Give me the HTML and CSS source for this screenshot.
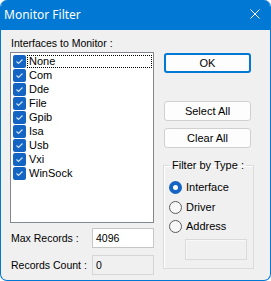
FILE: index.html
```html
<!DOCTYPE html>
<html lang="en">
<head>
    <meta charset="UTF-8">
    <title>Monitor Filter</title>
    <link rel="stylesheet" href="styles.css">
</head>
<body>
    <div class="window">
        <div class="titlebar">
            <span class="title">Monitor Filter</span>
            <svg class="close" width="10" height="10" viewBox="0 0 10 10">
                <path d="M0.5 0.5 L9.5 9.5 M9.5 0.5 L0.5 9.5" stroke="#fff" stroke-width="1" fill="none"/>
            </svg>
        </div>
        <div class="client">
            <div class="left">
                <div class="caption">Interfaces to Monitor :</div>
                <ul class="listbox">
                    <li class="item"><span class="check"></span><span class="text focus">None</span></li>
                    <li class="item"><span class="check"></span><span class="text">Com</span></li>
                    <li class="item"><span class="check"></span><span class="text">Dde</span></li>
                    <li class="item"><span class="check"></span><span class="text">File</span></li>
                    <li class="item"><span class="check"></span><span class="text">Gpib</span></li>
                    <li class="item"><span class="check"></span><span class="text">Isa</span></li>
                    <li class="item"><span class="check"></span><span class="text">Usb</span></li>
                    <li class="item"><span class="check"></span><span class="text">Vxi</span></li>
                    <li class="item"><span class="check"></span><span class="text">WinSock</span></li>
                </ul>
                <div class="field first">
                    <span class="field-label">Max Records :</span>
                    <div class="edit">4096</div>
                </div>
                <div class="field">
                    <span class="field-label">Records Count :</span>
                    <div class="edit readonly">0</div>
                </div>
            </div>
            <div class="right">
                <button class="btn default">OK</button>
                <button class="btn select">Select All</button>
                <button class="btn">Clear All</button>
                <fieldset class="group">
                    <legend>Filter by Type :</legend>
                    <div class="radios">
                        <label class="radio"><span class="dot on"></span>Interface</label>
                        <label class="radio"><span class="dot"></span>Driver</label>
                        <label class="radio"><span class="dot"></span>Address</label>
                    </div>
                    <div class="address-box"></div>
                </fieldset>
            </div>
        </div>
    </div>
</body>
</html>
```

FILE: styles.css
```css
body {
    margin: 0;
    padding: 0;
    background-color: #ffffff;
    font-family: "Liberation Sans", Arial, sans-serif;
    font-size: 10.5px;
    line-height: 13px;
    color: #000;
}
.window {
    width: 269px;
    height: 280px;
    border: 1px solid #0078d4;
    border-top: none;
    border-radius: 7px;
    background-color: #f0f0f0;
    overflow: hidden;
}
.titlebar {
    height: 30px;
    background-color: #0078d4;
    color: #fff;
    display: flex;
    align-items: center;
    justify-content: space-between;
    padding: 0 10px 2px 3px;
    box-sizing: border-box;
}
.title {
    font-family: "Noto Sans", sans-serif;
    font-size: 12px;
}
.client {
    display: flex;
    padding: 7px 0 0 9px;
}
.left {
    width: 144px;
}
.caption {
    padding-left: 1px;
    margin-bottom: 2px;
}
.listbox {
    list-style: none;
    margin: 0;
    padding: 1px 0;
    height: 167px;
    border: 1px solid #828790;
    background-color: #fff;
}
.item {
    display: flex;
    align-items: center;
    height: 14px;
}
.check {
    width: 13px;
    height: 13px;
    margin-left: 2px;
    border-radius: 2px;
    background-color: #1464c3;
    background-image: url("data:image/svg+xml;utf8,<svg xmlns='http://www.w3.org/2000/svg' width='13' height='13'><path d='M3.5 6.5 L5.5 8.5 L9.5 4.5' stroke='%23cfe2f7' stroke-width='1.2' fill='none'/></svg>");
}
.text {
    margin-left: 1px;
    padding: 0 1px;
    height: 13px;
    flex: 1;
    margin-right: 1px;
    border: 1px dotted transparent;
    box-sizing: border-box;
    line-height: 11px;
    font-size: 11px;
}
.text.focus {
    border-color: #000;
}
.field {
    display: flex;
    align-items: center;
    justify-content: space-between;
    margin-top: 7px;
}
.field.first {
    margin-top: 5px;
}
.field-label {
    padding-left: 1px;
}
.edit {
    width: 62px;
    height: 20px;
    box-sizing: border-box;
    border: 1px solid #c6c6c6;
    background-color: #fff;
    padding: 3px 3px;
}
.edit.readonly {
    background-color: #f0f0f0;
    border-color: #d6d6d6;
}
.right {
    margin-left: 10px;
    width: 90px;
    display: flex;
    flex-direction: column;
}
.btn {
    width: 87px;
    height: 20px;
    margin-top: 7px;
    font-family: inherit;
    font-size: 11px;
    color: #000;
    background-color: #fdfdfd;
    border: 1px solid #d0d0d0;
    border-radius: 3px;
    padding: 0;
}
.btn.default {
    margin-top: 16px;
    border: 2px solid #0078d4;
}
.btn.select {
    margin-top: 28px;
}
.group {
    margin: 11px 0 0 -1px;
    padding: 0 0 8px 0;
    width: 91px;
    box-sizing: border-box;
    border: 1px solid #dcdcdc;
    box-shadow: inset 1px 1px 0 #fff;
}
.group legend {
    margin-left: 6px;
    padding: 0 2px;
    font-size: 11px;
}
.radios {
    margin-top: 6px;
}
.radio {
    display: flex;
    align-items: center;
    height: 19.5px;
    padding-left: 5px;
    font-size: 11px;
}
.dot {
    width: 13px;
    height: 13px;
    box-sizing: border-box;
    border-radius: 50%;
    border: 1px solid #5c5c5c;
    background-color: #f7f7f7;
    margin-right: 4px;
}
.dot.on {
    border: 4px solid #1464c3;
    background-color: #fff;
}
.address-box {
    margin: 2px 0 0 21px;
    width: 62px;
    height: 21px;
    box-sizing: border-box;
    border: 1px solid #dadada;
    box-shadow: inset 1px 1px 0 #f8f8f8;
}
```
